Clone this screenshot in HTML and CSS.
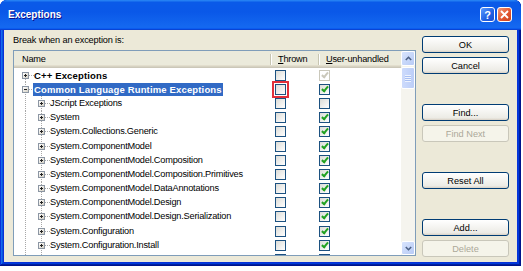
FILE: index.html
```html
<!DOCTYPE html>
<html lang="en">
<head>
  <meta charset="UTF-8">
  <title>Exceptions</title>
  <link rel="stylesheet" href="styles.css">
</head>
<body>
  <div class="window">
    <div class="titlebar">
      <span class="title">Exceptions</span>
      <span class="cap-btn help">?</span>
      <span class="cap-btn close">
        <svg width="9" height="9" viewBox="0 0 9 9"><path d="M1 1L8 8M8 1L1 8" stroke="#fff" stroke-width="1.8"/></svg>
      </span>
    </div>

    <div class="dialog">
      <div class="left">
        <div class="label">Break when an exception is:</div>
        <div class="listbox">
          <div class="tree">
            <div class="head">
              <div class="c-name">Name</div>
              <div class="c-thr"><u>T</u>hrown</div>
              <div class="c-usr"><u>U</u>ser-unhandled</div>
            </div>

            <div class="row">
              <div class="name lvl0 first"><span class="tg"></span><span class="txt bold">C++ Exceptions</span></div>
              <div class="c-thr"><span class="chk"></span></div>
              <div class="c-usr"><span class="chk on dis"></span></div>
            </div>
            <div class="row">
              <div class="name lvl0"><span class="tg open"></span><span class="txt bold sel">Common Language Runtime Exceptions</span></div>
              <div class="c-thr"><span class="chk mark"></span></div>
              <div class="c-usr"><span class="chk on"></span></div>
            </div>
            <div class="row">
              <div class="name lvl1"><span class="tg"></span><span class="txt">JScript Exceptions</span></div>
              <div class="c-thr"><span class="chk"></span></div>
              <div class="c-usr"><span class="chk"></span></div>
            </div>
            <div class="row">
              <div class="name lvl1"><span class="tg"></span><span class="txt">System</span></div>
              <div class="c-thr"><span class="chk"></span></div>
              <div class="c-usr"><span class="chk on"></span></div>
            </div>
            <div class="row">
              <div class="name lvl1"><span class="tg"></span><span class="txt">System.Collections.Generic</span></div>
              <div class="c-thr"><span class="chk"></span></div>
              <div class="c-usr"><span class="chk on"></span></div>
            </div>
            <div class="row">
              <div class="name lvl1"><span class="tg"></span><span class="txt">System.ComponentModel</span></div>
              <div class="c-thr"><span class="chk"></span></div>
              <div class="c-usr"><span class="chk on"></span></div>
            </div>
            <div class="row">
              <div class="name lvl1"><span class="tg"></span><span class="txt">System.ComponentModel.Composition</span></div>
              <div class="c-thr"><span class="chk"></span></div>
              <div class="c-usr"><span class="chk on"></span></div>
            </div>
            <div class="row">
              <div class="name lvl1"><span class="tg"></span><span class="txt">System.ComponentModel.Composition.Primitives</span></div>
              <div class="c-thr"><span class="chk"></span></div>
              <div class="c-usr"><span class="chk on"></span></div>
            </div>
            <div class="row">
              <div class="name lvl1"><span class="tg"></span><span class="txt">System.ComponentModel.DataAnnotations</span></div>
              <div class="c-thr"><span class="chk"></span></div>
              <div class="c-usr"><span class="chk on"></span></div>
            </div>
            <div class="row">
              <div class="name lvl1"><span class="tg"></span><span class="txt">System.ComponentModel.Design</span></div>
              <div class="c-thr"><span class="chk"></span></div>
              <div class="c-usr"><span class="chk on"></span></div>
            </div>
            <div class="row">
              <div class="name lvl1"><span class="tg"></span><span class="txt">System.ComponentModel.Design.Serialization</span></div>
              <div class="c-thr"><span class="chk"></span></div>
              <div class="c-usr"><span class="chk on"></span></div>
            </div>
            <div class="row">
              <div class="name lvl1"><span class="tg"></span><span class="txt">System.Configuration</span></div>
              <div class="c-thr"><span class="chk"></span></div>
              <div class="c-usr"><span class="chk on"></span></div>
            </div>
            <div class="row">
              <div class="name lvl1"><span class="tg"></span><span class="txt">System.Configuration.Install</span></div>
              <div class="c-thr"><span class="chk"></span></div>
              <div class="c-usr"><span class="chk on"></span></div>
            </div>
            <div class="row">
              <div class="name lvl1"><span class="tg"></span></div>
              <div class="c-thr"><span class="chk"></span></div>
              <div class="c-usr"><span class="chk on"></span></div>
            </div>
          </div>

          <div class="vscroll">
            <div class="sb-btn">
              <svg width="7" height="5" viewBox="0 0 7 5"><path d="M0.8 4L3.5 1.3L6.2 4" stroke="#4D6185" stroke-width="1.6" fill="none"/></svg>
            </div>
            <div class="sb-thumb"><span class="grip"></span></div>
            <div class="sb-track"></div>
            <div class="sb-btn">
              <svg width="7" height="5" viewBox="0 0 7 5"><path d="M0.8 1L3.5 3.7L6.2 1" stroke="#4D6185" stroke-width="1.6" fill="none"/></svg>
            </div>
          </div>
        </div>
      </div>

      <div class="buttons">
        <button class="btn">OK</button>
        <button class="btn">Cancel</button>
        <button class="btn group">Find...</button>
        <button class="btn" disabled>Find Next</button>
        <button class="btn group">Reset All</button>
        <button class="btn group">Add...</button>
        <button class="btn" disabled>Delete</button>
      </div>
    </div>
  </div>
</body>
</html>
```

FILE: styles.css
```css
* {
  box-sizing: border-box;
}
body {
  margin: 0;
  background: #fff;
  font-family: 'Liberation Sans', Arial, sans-serif;
  font-size: 9.2px;
  letter-spacing: -0.2px;
  color: #000;
}
.window {
  width: 521px;
  height: 266px;
  display: flex;
  flex-direction: column;
  padding: 0 4px 4px;
  border-radius: 7px 7px 0 0;
  background-color: #0831d9;
  box-shadow: inset -1px -1px #00138c, inset 1px 1px #0831d9, inset -2px -2px #001ea0,
    inset 2px 2px #166aee, inset -3px -3px #003bda, inset 3px 3px #0855dd;
}
.titlebar {
  height: 30px;
  margin: 0 -4px;
  display: flex;
  align-items: center;
  gap: 2px;
  padding: 0 9px 1px 8px;
  border-radius: 7px 7px 0 0;
  background: linear-gradient(180deg, #2b8af5, #0a5ae8 8%, #0a58e8 40%, #1468f0 88%, #1468f0 93%, #0b5cf0 95%, #0a44d4 96%, #0a44d4);
}
.title {
  flex: 1;
  color: #fff;
  font-weight: bold;
  font-size: 10px;
  letter-spacing: 0;
  text-shadow: 1px 1px #0f1089;
}
.cap-btn {
  width: 15px;
  height: 15px;
  border: 1px solid #fff;
  border-radius: 3px;
  display: flex;
  align-items: center;
  justify-content: center;
  color: #fff;
  font-weight: bold;
  font-size: 11px;
  letter-spacing: 0;
}
.help {
  background: linear-gradient(135deg, #5b9bff, #1f5fe3 60%, #1c4ed0);
}
.close {
  background: linear-gradient(135deg, #f09a7c, #e3562f 55%, #c8411f);
}

.dialog {
  flex: 1;
  display: flex;
  gap: 6px;
  padding: 0 8px 0 9px;
  background: #ece9d8;
}
.left {
  width: 403px;
  padding-top: 4px;
}
.label {
  height: 12px;
  line-height: 12px;
  margin-bottom: 4px;
  letter-spacing: -0.15px;
}
.listbox {
  height: 206px;
  display: flex;
  border: 1px solid #7f9db9;
  background: #fff;
}
.tree {
  flex: 1;
  overflow: hidden;
}
.head {
  display: flex;
  height: 17px;
  line-height: 16px;
  background: #ebeadb;
  box-shadow: inset 0 -1px #cbc7b8, inset 0 -2px #d6d2c2, inset 0 -3px #e2decd;
}
.head .c-name {
  padding-left: 8px;
}
.head .c-thr,
.head .c-usr {
  padding-left: 8px;
  background: linear-gradient(#c7c5b2, #c7c5b2) 0 3px / 1px 11px no-repeat,
    linear-gradient(#fff, #fff) 1px 3px / 1px 11px no-repeat;
}
.c-name,
.name {
  width: 256px;
  flex: none;
}
.c-thr {
  width: 48px;
  flex: none;
  padding-left: 5px;
}
.c-usr {
  width: 83px;
  flex: none;
  padding-left: 1px;
}

.row {
  display: flex;
  align-items: center;
  height: 14.2px;
}
.row .c-thr,
.row .c-usr {
  display: flex;
  align-items: center;
}
.name {
  height: 100%;
  display: flex;
  align-items: center;
  overflow: hidden;
  --v: repeating-linear-gradient(to bottom, #a8a8a8 0 1px, transparent 1px 2px);
  --h: repeating-linear-gradient(to right, #a8a8a8 0 1px, transparent 1px 2px);
}
.lvl0 {
  padding-left: 8px;
  background: var(--v) 11px 0 / 1px 100% no-repeat, var(--h) 11px 50% / 9px 1px no-repeat;
}
.lvl0.first {
  background: var(--v) 11px 100% / 1px 50% no-repeat, var(--h) 11px 50% / 9px 1px no-repeat;
}
.lvl1 {
  padding-left: 24px;
  background: var(--v) 11px 0 / 1px 100% no-repeat, var(--v) 27px 0 / 1px 100% no-repeat,
    var(--h) 27px 50% / 9px 1px no-repeat;
}
.tg {
  position: relative;
  width: 7px;
  height: 7px;
  flex: none;
  border: 1px solid #8c96a3;
  background: linear-gradient(135deg, #fff, #d4d0c4);
}
.tg::before {
  content: '';
  position: absolute;
  left: 1px;
  top: 2px;
  width: 3px;
  height: 1px;
  background: #222;
}
.tg::after {
  content: '';
  position: absolute;
  left: 2px;
  top: 1px;
  width: 1px;
  height: 3px;
  background: #222;
}
.tg.open::after {
  display: none;
}
.txt {
  margin-left: 4px;
  padding: 0 1px;
  height: 13px;
  line-height: 13px;
  white-space: nowrap;
}
.bold {
  font-weight: bold;
  font-size: 9.5px;
  letter-spacing: 0.15px;
}
.sel {
  background: #316ac5;
  color: #fff;
}

.chk {
  position: relative;
  width: 11px;
  height: 11px;
  border: 1px solid #1c5180;
  background: linear-gradient(135deg, #dcdcd7, #fff);
}
.chk.on::after {
  content: '';
  position: absolute;
  left: 3px;
  top: 0;
  width: 2px;
  height: 5px;
  border-right: 2px solid #21a121;
  border-bottom: 2px solid #21a121;
  transform: rotate(40deg);
}
.chk.dis {
  border-color: #cac8bb;
  background: #fff;
}
.chk.dis::after {
  border-color: #cac8bb;
}
.chk.mark {
  outline: 2px solid #e0303a;
  outline-offset: 1px;
}

.vscroll {
  width: 14px;
  display: flex;
  flex-direction: column;
  background: #f5f4ee;
}
.sb-btn {
  height: 15px;
  display: flex;
  align-items: center;
  justify-content: center;
  border: 1px solid #fff;
  border-radius: 2px;
  background: linear-gradient(135deg, #d8e4fd, #b8cbf6);
}
.sb-btn:last-child {
  height: 14px;
}
.sb-thumb {
  height: 22px;
  margin-top: 1px;
  display: flex;
  align-items: center;
  justify-content: center;
  border: 1px solid #fff;
  border-radius: 2px;
  background: linear-gradient(to right, #cddbfc, #bccef8);
}
.grip {
  width: 6px;
  height: 7px;
  background: repeating-linear-gradient(#eef3fe 0 1px, #a8bff2 1px 2px);
}
.sb-track {
  flex: 1;
}

.buttons {
  width: 87px;
  display: flex;
  flex-direction: column;
  gap: 4px;
  padding-top: 6px;
}
.btn {
  height: 17px;
  padding: 0;
  font-family: inherit;
  font-size: 9.2px;
  letter-spacing: 0;
  color: #000;
  border: 1px solid #003c74;
  border-radius: 3px;
  background: linear-gradient(180deg, #fff, #ecebe5 86%, #d8d0c4);
}
.btn.group {
  margin-top: 26px;
}
.btn:disabled {
  color: #aca899;
  border-color: #c9c7ba;
  background: #f5f4ea;
}
```
